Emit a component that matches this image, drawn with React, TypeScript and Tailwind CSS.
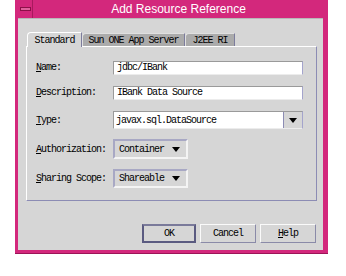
import React from 'react';

const mono = "font-['Liberation_Mono',monospace] text-[10px] tracking-[-1px] text-black";

function Mn({ ch, rest }: { ch: string; rest: string }) {
  return (
    <span>
      <span className="underline underline-offset-[1px]">{ch}</span>
      {rest}
    </span>
  );
}

function Arrow() {
  return (
    <svg width="8" height="5" viewBox="0 0 8 5" className="shrink-0">
      <path d="M0 0 L8 0 L4 5 Z" fill="#000" />
    </svg>
  );
}

function TextField({ value, h = 'h-[14px]' }: { value: string; h?: string }) {
  return (
    <div
      className={`flex-1 ${h} bg-white border border-t-[#9a9a9a] border-l-[#9a9a9a] border-r-[#a4a4cc] border-b-[#ececec] flex items-center pl-[3px] ${mono}`}
    >
      {value}
    </div>
  );
}

function Row({ label, mt, children }: { label: React.ReactNode; mt: string; children: React.ReactNode }) {
  return (
    <div className={`flex items-center ${mt}`}>
      <div className={`w-[77px] shrink-0 ${mono}`}>{label}</div>
      {children}
    </div>
  );
}

function Choice({ value, h }: { value: string; h: string }) {
  return (
    <div
      className={`w-[75px] ${h} bg-[#d6d6d6] border-2 border-t-[#a8a8c4] border-l-[#a8a8c4] border-r-[#f4f4f4] border-b-[#f4f4f4] flex items-center justify-between pl-[4px] pr-[6px] ${mono}`}
    >
      <span>{value}</span>
      <Arrow />
    </div>
  );
}

function Btn({ children, w, isDefault = false }: { children: React.ReactNode; w: string; isDefault?: boolean }) {
  return (
    <div
      className={`${w} h-[19px] flex items-center justify-center border ${
        isDefault
          ? 'border-2 border-t-[#7a7a9a] border-l-[#5a5a80] border-r-[#5a5a80] border-b-[#5a5a80]'
          : 'border-t-[#fafafa] border-l-[#fafafa] border-r-[#8a8aa8] border-b-[#8a8aa8]'
      } ${mono}`}
    >
      {children}
    </div>
  );
}

export default function App() {
  return (
    <div className="w-[346px] h-[276px] bg-white overflow-hidden">
      <div className="ml-[15px] w-[313px] h-[254px] flex flex-col bg-[#d3287c] pl-[3px] pr-[5px] pb-[3px] border-b border-[#9c1458]">
        {/* title bar */}
        <div className="h-[18px] flex items-stretch shrink-0">
          <div className="w-[15px] border-r border-[#a81a5e] flex items-center justify-center">
            <div className="w-[11px] h-[4px] bg-[#e0609c] border border-[#8c1048]" />
          </div>
          <div className="flex-1 flex items-center justify-center text-white text-[12px] font-['Liberation_Sans',sans-serif] pl-[1px]">
            Add Resource Reference
          </div>
        </div>

        {/* client area */}
        <div className="flex-1 bg-[#d6d6d6] flex flex-col pl-[8px] pr-[6px] border-t border-[#b8b8b8]">
          {/* tabs */}
          <div className="flex items-end mt-[12px] h-[15px] ml-[1px]">
            <div className={`w-[55px] h-[15px] bg-[#d6d6d6] border-t border-l border-white border-r border-r-[#7c7c9c] rounded-tl-[4px] flex items-center justify-center relative top-[1px] ${mono}`}>
              Standard
            </div>
            <div className={`w-[103px] h-[13px] bg-[#ababab] border-t border-l border-[#e0e0e0] border-r border-r-[#7c7c9c] rounded-tl-[4px] flex items-center justify-center ${mono}`}>
              Sun ONE App Server
            </div>
            <div className={`w-[50px] h-[13px] bg-[#ababab] border-t border-l border-[#e0e0e0] border-r border-r-[#7c7c9c] rounded-tl-[4px] flex items-center justify-center ${mono}`}>
              J2EE RI
            </div>
          </div>

          {/* panel */}
          <div className="h-[155px] border border-t-white border-l-white border-r-[#8c8cb4] border-b-[#8c8cb4] flex flex-col pl-[9px] pr-[13px]">
            <Row label={<Mn ch="N" rest="ame:" />} mt="mt-[13px]">
              <TextField value="jdbc/IBank" />
            </Row>
            <Row label={<Mn ch="D" rest="escription:" />} mt="mt-[10px]">
              <TextField value="IBank Data Source" />
            </Row>
            <Row label={<Mn ch="T" rest="ype:" />} mt="mt-[11px]">
              <div className="flex-1 h-[18px] flex border border-t-[#9a9a9a] border-l-[#9a9a9a] border-r-[#a4a4cc] border-b-[#ececec]">
                <div className={`flex-1 bg-white flex items-center pl-[2px] ${mono}`}>javax.sql.DataSource</div>
                <div className="w-[19px] bg-[#d6d6d6] border-l border-[#8c8cb4] flex items-center justify-center">
                  <Arrow />
                </div>
              </div>
            </Row>
            <Row label={<Mn ch="A" rest="uthorization:" />} mt="mt-[10px]">
              <Choice value="Container" h="h-[20px]" />
            </Row>
            <Row label={<Mn ch="S" rest="haring Scope:" />} mt="mt-[10px]">
              <Choice value="Shareable" h="h-[19px]" />
            </Row>
          </div>

          {/* buttons */}
          <div className="flex justify-end gap-[4px] mt-[23px] pr-[1px]">
            <Btn w="w-[54px]" isDefault>OK</Btn>
            <Btn w="w-[56px]">Cancel</Btn>
            <Btn w="w-[56px]"><Mn ch="H" rest="elp" /></Btn>
          </div>
        </div>
      </div>
    </div>
  );
}
